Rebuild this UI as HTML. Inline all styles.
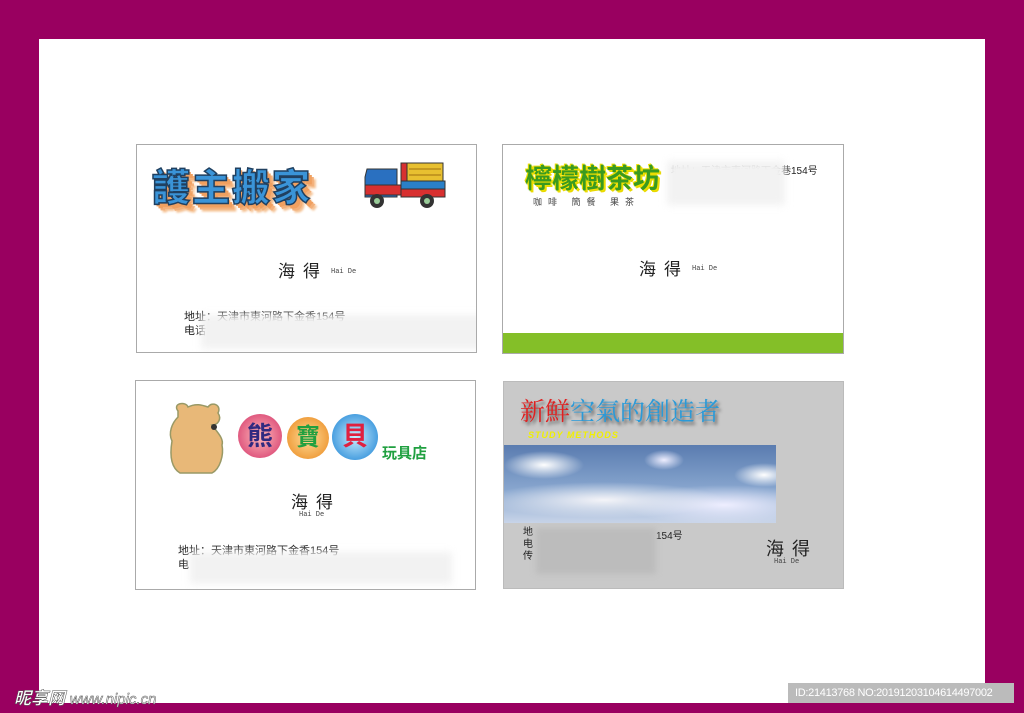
<!DOCTYPE html>
<html><head><meta charset="utf-8"><style>
*{margin:0;padding:0;box-sizing:border-box}
body{width:1024px;height:713px;background:#990060;position:relative;overflow:hidden;font-family:"Liberation Sans","Noto Sans CJK SC",sans-serif}
.abs{position:absolute}
.card{position:absolute;background:#fff;border:1px solid #aaa;overflow:hidden}
.blur{position:absolute;background:#f2f2f2;filter:blur(4px)}
.name{position:absolute;font-size:17px;color:#222;letter-spacing:8px}
.en{position:absolute;font-size:7px;color:#444;font-family:"Liberation Mono",monospace}
.sm{position:absolute;font-size:11px;color:#222}
</style></head><body>
<div class="abs" style="left:39px;top:39px;width:946px;height:664px;background:#fff"></div>

<!-- card 1 -->
<div class="card" style="left:136px;top:144px;width:341px;height:209px">
 <div class="abs" style="left:15px;top:12px;font-size:38px;font-weight:900;color:#3a94d8;letter-spacing:2px;text-shadow:2px 2px 0 #f0a060,4px 4px 0 #f0a060,6px 6px 0 #f3b07a,8px 8px 2px #f5c090;-webkit-text-stroke:1.5px #204060">護主搬家</div>
 <svg class="abs" style="left:226px;top:14px" width="84" height="56" viewBox="0 0 84 56">
  <rect x="38" y="4" width="6" height="18" fill="#d83030" stroke="#333"/>
  <rect x="44" y="4" width="36" height="18" fill="#e8c030" stroke="#333"/>
  <line x1="46" y1="10" x2="78" y2="10" stroke="#a07010"/><line x1="46" y1="16" x2="78" y2="16" stroke="#a07010"/>
  <rect x="38" y="22" width="44" height="14" fill="#2a80c8" stroke="#333"/>
  <path d="M4 10h30v28H2V18z" fill="#2a70c0" stroke="#333"/>
  <rect x="2" y="26" width="36" height="10" fill="#d83030" stroke="#333"/>
  <rect x="38" y="30" width="44" height="8" fill="#d83030" stroke="#333"/>
  <circle cx="14" cy="42" r="7" fill="#333"/><circle cx="14" cy="42" r="3" fill="#9c9"/>
  <circle cx="64" cy="42" r="7" fill="#333"/><circle cx="64" cy="42" r="3" fill="#9c9"/>
 </svg>
 <div class="name" style="left:141px;top:112px">海得</div>
 <div class="en" style="left:194px;top:123px">Hai De</div>
 <div class="sm" style="left:47px;top:165px;line-height:14px">地址：天津市東河路下金香154号<br>电话</div>
 <div class="blur" style="left:64px;top:170px;width:290px;height:34px"></div>
</div>

<!-- card 2 -->
<div class="card" style="left:502px;top:144px;width:342px;height:210px">
 <div class="abs" style="left:22px;top:12px;font-size:27px;font-weight:bold;color:#3a9a20;text-shadow:1px 1px 0 #f0e000,-1px -1px 0 #f0e000,2px 2px 0 #e8d800">檸檬樹茶坊</div>
 <div class="abs" style="left:30px;top:50px;font-size:9px;color:#444;letter-spacing:6px">咖啡 簡餐 果茶</div>
 <div class="sm" style="left:168px;top:17px;font-size:10px">地址：天津市東河路下金巷154号</div>
 <div class="blur" style="left:164px;top:16px;width:118px;height:44px"></div>
 <div class="name" style="left:136px;top:110px">海得</div>
 <div class="en" style="left:189px;top:120px">Hai De</div>
 <div class="abs" style="left:0;top:188px;width:342px;height:22px;background:#84bf28"></div>
</div>

<!-- card 3 -->
<div class="card" style="left:135px;top:380px;width:341px;height:210px">
 <svg class="abs" style="left:30px;top:20px" width="60" height="80" viewBox="0 0 60 80">
  <path d="M12 10c-6-8 8-10 10-4 8-4 14-2 20 0 4-6 14-2 10 6 4 6 0 12-6 12 6 8 12 14 10 20 2 10-2 24-10 28H14c-10-6-10-20-8-32-4-8 0-18 6-24z" fill="#e8b878" stroke="#996" stroke-width="1.5"/>
  <circle cx="48" cy="26" r="3" fill="#333"/>
 </svg>
 <div class="abs" style="left:102px;top:33px;width:44px;height:44px;border-radius:50%;background:radial-gradient(#fbb,#e05a80 70%,#d8d0f0);font-size:26px;font-weight:bold;color:#302a80;text-align:center;line-height:44px">熊</div>
 <div class="abs" style="left:151px;top:36px;width:42px;height:42px;border-radius:50%;background:radial-gradient(#fd9,#f0a040 70%,#d8e0f0);font-size:24px;font-weight:bold;color:#20a040;text-align:center;line-height:42px">寶</div>
 <div class="abs" style="left:196px;top:33px;width:46px;height:46px;border-radius:50%;background:radial-gradient(#cef,#4aa0e0 70%,#d0d8f0);font-size:26px;font-weight:bold;color:#e02040;text-align:center;line-height:44px">貝</div>
 <div class="abs" style="left:246px;top:61px;font-size:15px;font-weight:bold;color:#20a040">玩具店</div>
 <div class="name" style="left:155px;top:107px">海得</div>
 <div class="en" style="left:163px;top:130px">Hai De</div>
 <div class="sm" style="left:42px;top:163px;line-height:14px">地址：天津市東河路下金香154号<br>电</div>
 <div class="blur" style="left:54px;top:171px;width:262px;height:32px"></div>
</div>

<!-- card 4 -->
<div class="abs" style="left:503px;top:381px;width:341px;height:208px;background:#c9c9c9;border:1px solid #bbb;overflow:hidden">
 <div class="abs" style="left:16px;top:10px;font-size:25px;font-family:'Liberation Serif','Noto Serif CJK SC',serif;color:#2a9ad8;text-shadow:2px 3px 3px #555"><span style="color:#e02020">新鮮</span>空氣的創造者</div>
 <div class="abs" style="left:24px;top:48px;font-size:9px;font-style:italic;font-weight:bold;color:#f0f000;letter-spacing:1px">STUDY METHODS</div>
 <div class="abs" style="left:0;top:63px;width:272px;height:78px;background:radial-gradient(ellipse 40px 14px at 40px 20px,#fff,transparent),radial-gradient(ellipse 20px 10px at 160px 15px,#eef,transparent),radial-gradient(ellipse 30px 12px at 260px 30px,#fff,transparent),radial-gradient(ellipse 120px 18px at 100px 55px,#f4f4f8,transparent),radial-gradient(ellipse 100px 20px at 220px 60px,#eef,transparent),linear-gradient(#5a7cb0,#8aa8d0 60%,#c8d4e8)"></div>
 <div class="sm" style="left:19px;top:145px;font-size:10px;line-height:12px">地<br>电<br>传</div>
 <div class="sm" style="left:152px;top:145px;font-size:10px">154号</div>
 <div class="abs" style="left:32px;top:146px;width:120px;height:46px;background:#bcbcbc;filter:blur(3px)"></div>
 <div class="name" style="left:262px;top:153px;font-size:18px">海得</div>
 <div class="en" style="left:270px;top:176px">Hai De</div>
</div>

<!-- watermarks -->
<div class="abs" style="left:14px;top:684px;font-size:17px;font-weight:bold;color:#fff;-webkit-text-stroke:.5px #555;font-style:italic">昵享网 <span style="font-size:15px;font-weight:normal">www.nipic.cn</span></div>
<div class="abs" style="left:788px;top:683px;width:226px;height:20px;background:#bbb;color:#fff;font-size:11px;line-height:20px;padding-left:7px;letter-spacing:-.3px">ID:21413768 NO:20191203104614497002</div>
</body></html>
